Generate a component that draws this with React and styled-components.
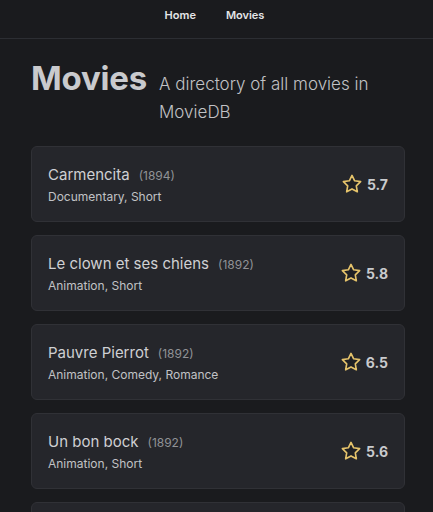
import React from "react";
import styled, { createGlobalStyle } from "styled-components";

const movies = [
  { title: "Carmencita", year: 1894, genres: "Documentary, Short", rating: "5.7" },
  { title: "Le clown et ses chiens", year: 1892, genres: "Animation, Short", rating: "5.8" },
  { title: "Pauvre Pierrot", year: 1892, genres: "Animation, Comedy, Romance", rating: "6.5" },
  { title: "Un bon bock", year: 1892, genres: "Animation, Short", rating: "5.6" },
  { title: "Blacksmith Scene", year: 1893, genres: "Comedy, Short", rating: "6.2" },
];

function Star() {
  return (
    <svg width="22" height="22" viewBox="0 0 24 24">
      <path
        d="M12 2.6l2.9 5.9 6.5.9-4.7 4.6 1.1 6.5L12 17.4l-5.8 3.1 1.1-6.5-4.7-4.6 6.5-.9z"
        fill="#1f2024"
        stroke="#e5c36b"
        strokeWidth="1.8"
        strokeLinejoin="round"
      />
    </svg>
  );
}

function App() {
  return (
    <>
      <GlobalStyle />
      <Nav>
        <NavLink>Home</NavLink>
        <NavLink>Movies</NavLink>
      </Nav>
      <Main>
        <Header>
          <Title>Movies</Title>
          <Subtitle>A directory of all movies in MovieDB</Subtitle>
        </Header>
        <List>
          {movies.map((m, i) => (
            <Card key={`movie_${i}`}>
              <Info>
                <NameRow>
                  <Name>{m.title}</Name>
                  <Year>({m.year})</Year>
                </NameRow>
                <Genres>{m.genres}</Genres>
              </Info>
              <Rating>
                <Star />
                <Score>{m.rating}</Score>
              </Rating>
            </Card>
          ))}
        </List>
      </Main>
    </>
  );
}

const GlobalStyle = createGlobalStyle`
  html, body {
    margin: 0;
    background: #1a1b1e;
    height: 512px;
    overflow: hidden;
  }
  body {
    font-family: Inter, "Liberation Sans", sans-serif;
    color: #c1c2c5;
  }
  * { box-sizing: border-box; }
`;

const Nav = styled.nav`
  height: 39px;
  border-bottom: 1px solid #2c2e33;
  display: flex;
  justify-content: center;
  align-items: center;
  gap: 30px;
  padding-bottom: 8px;
  padding-right: 4px;
`;

const NavLink = styled.a`
  font-size: 11px;
  font-weight: 600;
  color: #e4e5e7;
  cursor: pointer;
`;

const Main = styled.main`
  padding: 20px 28px 0 31px;
`;

const Header = styled.div`
  display: flex;
  align-items: baseline;
  gap: 12px;
  margin-bottom: 20px;
`;

const Title = styled.h1`
  margin: 0;
  font-size: 33px;
  font-weight: 700;
  color: #c9cacd;
  line-height: 1.2;
  letter-spacing: -0.2px;
`;

const Subtitle = styled.p`
  margin: 0;
  font-size: 17px;
  font-weight: 300;
  line-height: 28px;
  color: #c1c2c5;
  max-width: 220px;
`;

const List = styled.div`
  display: flex;
  flex-direction: column;
  gap: 13px;
`;

const Card = styled.div`
  height: 76px;
  background: #25262b;
  border: 1px solid #303136;
  border-radius: 6px;
  padding: 0 16px 0 16px;
  display: flex;
  align-items: center;
  justify-content: space-between;
  flex-shrink: 0;
`;

const Info = styled.div`
  display: flex;
  flex-direction: column;
  gap: 5px;
`;

const NameRow = styled.div`
  display: flex;
  align-items: baseline;
  gap: 9px;
`;

const Name = styled.span`
  font-size: 15px;
  color: #cfd0d3;
`;

const Year = styled.span`
  font-size: 12px;
  color: #909296;
`;

const Genres = styled.span`
  font-size: 12px;
  color: #c1c2c5;
`;

const Rating = styled.div`
  display: flex;
  align-items: center;
  gap: 4px;
`;

const Score = styled.span`
  font-size: 14px;
  font-weight: 700;
  color: #c9cacd;
`;

export default App;
